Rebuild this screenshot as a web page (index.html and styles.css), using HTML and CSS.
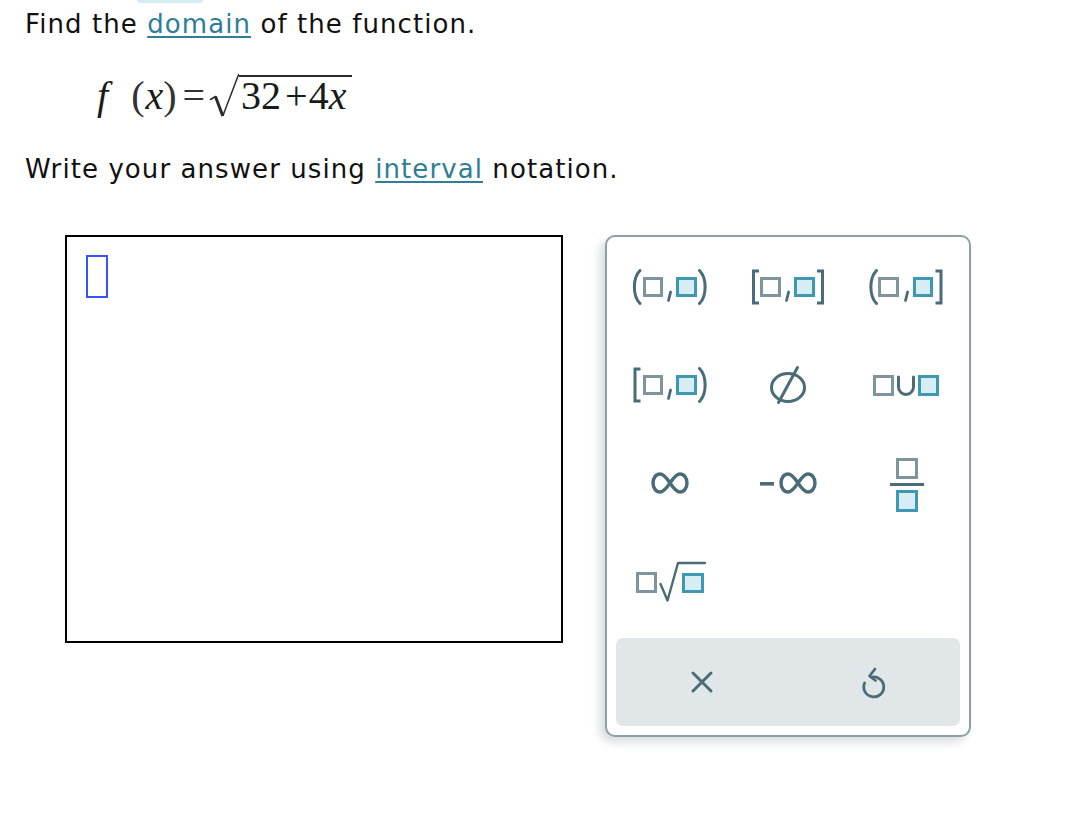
FILE: index.html
```html
<!DOCTYPE html>
<html lang="en">
<head>
<meta charset="utf-8">
<title>Find the domain</title>
<link rel="stylesheet" href="styles.css">
</head>
<body>
<div class="page">
  <div class="tab-sliver"></div>
  <p class="line">Find the <a class="term" href="#">domain</a> of the function.</p>
  <div class="math">
    <span class="mi f">f</span><span class="mo lp">(</span><span class="mi x1">x</span><span class="mo rp">)</span><span class="mo eq">=</span><span class="sqrt"><svg class="radical" width="30" height="45" viewBox="0 0 30 45"><path d="M1.5 26.5 L6.5 23.5" stroke="#2a2a2a" stroke-width="1.6" fill="none" stroke-linecap="round"/><path d="M6.5 23.5 L13.8 43" stroke="#2a2a2a" stroke-width="3" fill="none"/><path d="M13.8 43 L29.8 1" stroke="#2a2a2a" stroke-width="1.5" fill="none"/></svg><span class="radicand">32<span class="plus">+</span>4<span class="mi">x</span></span></span>
  </div>
  <p class="line line2">Write your answer using <a class="term" href="#">interval</a> notation.</p>

  <div class="answer">
    <div class="input-box"><span class="cursor"></span></div>

    <div class="keypad">
      <div class="keys">
        <button class="key" aria-label="open interval">
          <svg width="76" height="36" viewBox="0 0 76 36">
            <path class="dk" d="M8 1.5 C0.5 9 0.5 27 8 34.5"/>
            <rect class="bx" x="12.5" y="9.5" width="17" height="17"/>
            <path class="cm" d="M38.6 23 L36.5 31.5"/>
            <rect class="bb" x="45.5" y="9.5" width="18" height="17"/>
            <path class="dk" d="M67.5 1.5 C75 9 75 27 67.5 34.5"/>
          </svg>
        </button>
        <button class="key" aria-label="closed interval">
          <svg width="76" height="36" viewBox="0 0 76 36">
            <path class="dk sq" d="M9 2 H3.5 V34 H9"/>
            <rect class="bx" x="11.5" y="9.5" width="18" height="17"/>
            <path class="cm" d="M38.6 23 L36.5 31.5"/>
            <rect class="bb" x="45.5" y="9.5" width="18" height="17"/>
            <path class="dk sq" d="M67 2 H72.5 V34 H67"/>
          </svg>
        </button>
        <button class="key" aria-label="left-open interval">
          <svg width="76" height="36" viewBox="0 0 76 36">
            <path class="dk" d="M8.5 1.5 C1 9 1 27 8.5 34.5"/>
            <rect class="bx" x="11.5" y="9.5" width="18" height="17"/>
            <path class="cm" d="M39.6 23 L37.5 31.5"/>
            <rect class="bb" x="46.5" y="9.5" width="17" height="17"/>
            <path class="dk sq" d="M67.5 2 H73 V34 H67.5"/>
          </svg>
        </button>

        <button class="key" aria-label="right-open interval">
          <svg width="76" height="36" viewBox="0 0 76 36">
            <path class="dk sq" d="M8.5 2 H3 V34 H8.5"/>
            <rect class="bx" x="12.5" y="9.5" width="17" height="17"/>
            <path class="cm" d="M38.6 23 L36.5 31.5"/>
            <rect class="bb" x="45.5" y="9.5" width="18" height="17"/>
            <path class="dk" d="M67.5 1.5 C75 9 75 27 67.5 34.5"/>
          </svg>
        </button>
        <button class="key" aria-label="empty set">
          <svg width="40" height="40" viewBox="0 0 40 40">
            <ellipse class="dk" cx="20" cy="22.5" rx="16.5" ry="14" stroke-width="3.4"/>
            <path class="dk" d="M10.5 37.5 L29.5 2.5" stroke-width="3.4"/>
          </svg>
        </button>
        <button class="key" aria-label="union">
          <svg width="68" height="24" viewBox="0 0 68 24">
            <rect class="bx" x="2.5" y="3.5" width="18" height="18"/>
            <path class="dk" d="M26.5 4 V14 A7.5 7.5 0 0 0 41.5 14 V4"/>
            <rect class="bb" x="47.5" y="3.5" width="18" height="18"/>
          </svg>
        </button>

        <button class="key" aria-label="infinity">
          <svg width="38" height="22" viewBox="0 0 38 22">
            <path class="dk inf" d="M19 11 C23 5 26 2 29 2 C33 2 36 6 36 11 C36 16 33 20 29 20 C26 20 23 17 19 11 C15 5 12 2 9 2 C5 2 2 6 2 11 C2 16 5 20 9 20 C12 20 15 17 19 11 Z"/>
          </svg>
        </button>
        <button class="key" aria-label="negative infinity">
          <svg width="60" height="22" viewBox="0 0 60 22">
            <rect class="fl" x="2" y="10" width="14" height="3.6"/>
            <path class="dk inf" transform="translate(21 0)" d="M19 11 C23 5 26 2 29 2 C33 2 36 6 36 11 C36 16 33 20 29 20 C26 20 23 17 19 11 C15 5 12 2 9 2 C5 2 2 6 2 11 C2 16 5 20 9 20 C12 20 15 17 19 11 Z"/>
          </svg>
        </button>
        <button class="key" aria-label="fraction">
          <svg width="40" height="58" viewBox="0 0 40 58">
            <rect class="bx" x="11.5" y="5.5" width="19" height="18"/>
            <rect class="fl" x="4" y="29" width="34" height="3"/>
            <rect class="bb" x="11.5" y="37.5" width="19" height="19"/>
          </svg>
        </button>

        <button class="key" aria-label="nth root">
          <svg width="72" height="42" viewBox="0 0 72 42">
            <rect class="bx" x="3.5" y="13.5" width="18" height="18"/>
            <path class="dk rt" d="M26.5 24 L33.5 40.5 L44 3 H71"/>
            <rect class="bb" x="49.5" y="14.5" width="19" height="17"/>
          </svg>
        </button>
      </div>

      <div class="actions">
        <button class="act" aria-label="clear">
          <svg width="24" height="24" viewBox="0 0 24 24">
            <path class="dk" d="M3 3 L21 21 M21 3 L3 21"/>
          </svg>
        </button>
        <button class="act" aria-label="undo">
          <svg width="28" height="34" viewBox="0 0 28 34">
            <path class="dk thin" d="M11.5 12.2 A10 10 0 1 1 4.6 18"/>
            <path class="dk thin" d="M15 4 L9.5 11 L15.5 15.5"/>
          </svg>
        </button>
      </div>
    </div>
  </div>
</div>
</body>
</html>
```

FILE: styles.css
```css
body {
  margin: 0;
  background: #ffffff;
  color: #111111;
  font-family: "DejaVu Sans", Verdana, sans-serif;
}

.page {
  position: relative;
  padding: 9px 0 40px 25px;
}

.tab-sliver {
  position: absolute;
  top: 0;
  left: 137px;
  width: 66px;
  height: 3px;
  background: #d3edf3;
  border-radius: 0 0 8px 8px;
}

.line {
  margin: 0;
  font-size: 26px;
  line-height: 30px;
  letter-spacing: 1.08px;
}

.line2 {
  margin-top: 34px;
}

.term {
  color: #2f7d96;
  text-decoration: underline;
  text-decoration-thickness: 2px;
  text-underline-offset: 3px;
}

/* math line */
.math {
  margin-top: 33px;
  height: 48px;
  line-height: 48px;
  padding-left: 72px;
  font-family: "Liberation Serif", "Times New Roman", serif;
  font-size: 40px;
  color: #1a1a1a;
  white-space: nowrap;
}

.mi {
  font-style: italic;
}

.f {
  margin-right: 23px;
}

.mo {
  color: #333333;
}

.x1 {
  margin-left: 1px;
}

.eq {
  margin-left: 6px;
}

.sqrt {
  margin-left: 4px;
}

.radical {
  vertical-align: -9px;
}

.radicand {
  display: inline-block;
  line-height: 38px;
  padding: 0 6px 0 2px;
  border-top: 2px solid #2a2a2a;
}

.plus {
  margin: 0 1px 0 4px;
}

/* answer area */
.answer {
  display: flex;
  align-items: flex-start;
  margin: 51px 0 0 40px;
}

.input-box {
  width: 498px;
  height: 408px;
  box-sizing: border-box;
  border: 2px solid #000000;
  padding: 18px 19px;
}

.cursor {
  display: block;
  width: 22px;
  height: 43px;
  box-sizing: border-box;
  border: 2px solid #3556ff;
}

.keypad {
  margin-left: 42px;
  width: 366px;
  height: 502px;
  box-sizing: border-box;
  border: 2px solid #8ba0a8;
  border-radius: 10px;
  padding: 1px 9px 9px;
  background: #ffffff;
  box-shadow: -5px 5px 10px rgba(60, 80, 90, 0.2);
  display: flex;
  flex-direction: column;
}

.keys {
  display: grid;
  grid-template-columns: repeat(3, 1fr);
  grid-auto-rows: 98px;
  margin: 0 -5px;
}

.key,
.act {
  display: flex;
  align-items: center;
  justify-content: center;
  background: none;
  border: 0;
  padding: 0;
  margin: 0;
}

.key svg,
.act svg {
  display: block;
}

.actions {
  margin-top: 8px;
  height: 88px;
  background: #e1e6e9;
  border-radius: 7px;
  display: flex;
}

.act {
  flex: 1;
}

/* icon strokes */
.dk {
  fill: none;
  stroke: #4a6b78;
  stroke-width: 3;
  stroke-linecap: round;
  stroke-linejoin: round;
}

.dk.sq {
  stroke-linecap: butt;
  stroke-linejoin: miter;
}

.dk.inf {
  stroke-width: 3.4;
}

.dk.rt {
  stroke-width: 2.4;
}

.dk.thin {
  stroke-width: 2.8;
}

.fl {
  fill: #4a6b78;
}

.cm {
  fill: none;
  stroke: #4a6b78;
  stroke-width: 2.8;
  stroke-linecap: round;
}

.bx {
  fill: #ffffff;
  stroke: #7e959e;
  stroke-width: 3;
}

.bb {
  fill: #d5edf3;
  stroke: #3f98b2;
  stroke-width: 3;
}
```
